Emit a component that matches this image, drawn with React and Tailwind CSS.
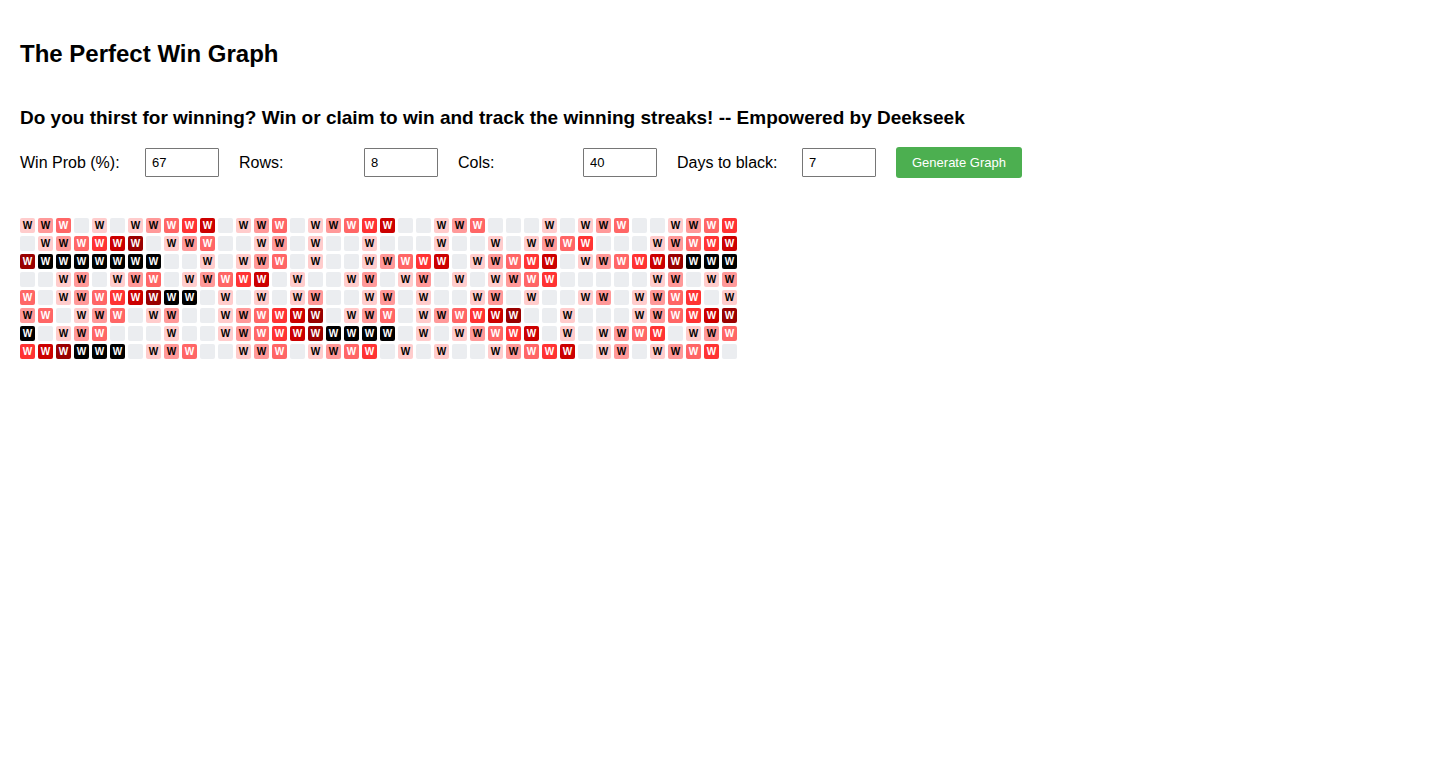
import { useState } from "react";

const INITIAL_ROWS = [
  "1110101111101110111110011100010111001111",
  "0111111011100110100100010010111100011111",
  "1111111100101110100111110111110111111111",
  "0011011101111101001101101011110000011011",
  "1011111111010101100110100110100110111101",
  "1101110110011111101110111111001000111111",
  "1011100010011111111110101111101011110111",
  "1111110111001110111101010011111011011110",
];

const EMPTY = "bg-[#ebedf0] text-black";
const SHADES = [
  "bg-[#ffcccc] text-black",
  "bg-[#ff9999] text-black",
  "bg-[#ff6666] text-white",
  "bg-[#ff3333] text-white",
  "bg-[#cc0000] text-white",
  "bg-[#990000] text-white",
];
const BLACK = "bg-black text-white";

// A streak runs on from the end of one row to the start of the next.
function toStreaks(rows) {
  let streak = 0;
  return rows.map((row) =>
    [...row].map((day) => {
      streak = day === "1" ? streak + 1 : 0;
      return streak;
    })
  );
}

function shadeFor(streak, daysToBlack) {
  if (streak === 0) return EMPTY;
  if (streak >= daysToBlack) return BLACK;
  const step = Math.floor(((streak - 1) * SHADES.length) / Math.max(1, daysToBlack - 1));
  return SHADES[Math.min(step, SHADES.length - 1)];
}

function NumberField({ id, label, value, onChange, min, max }) {
  return (
    <div className="flex items-center gap-[5px]">
      <label htmlFor={id} className="w-[120px]">
        {label}
      </label>
      <input
        id={id}
        type="number"
        min={min}
        max={max}
        value={value}
        onChange={(event) => onChange(event.target.value)}
        className="h-[29px] w-[74px] rounded-[1px] border border-[#767676] bg-white px-1.5 text-[13px]"
      />
    </div>
  );
}

export default function App() {
  const [prob, setProb] = useState("67");
  const [rows, setRows] = useState("8");
  const [cols, setCols] = useState("40");
  const [days, setDays] = useState("7");
  const [graph, setGraph] = useState({ rows: INITIAL_ROWS, days: 7 });

  function generate(event) {
    event.preventDefault();
    const next = Array.from({ length: Number(rows) }, () =>
      Array.from({ length: Number(cols) }, () =>
        Math.random() * 100 < Number(prob) ? "1" : "0"
      ).join("")
    );
    setGraph({ rows: next, days: Number(days) });
  }

  return (
    <main className="p-5 pt-10 font-['Liberation_Sans',Arial,sans-serif] text-base text-black">
      <h1 className="text-2xl leading-7 font-bold">The Perfect Win Graph</h1>
      <h2 className="mt-10 text-[19px] leading-5 font-bold">
        Do you thirst for winning? Win or claim to win and track the winning streaks! -- Empowered by Deekseek
      </h2>

      <form onSubmit={generate} className="mt-[19px] flex flex-wrap items-center gap-5">
        <NumberField id="prob" label="Win Prob (%):" value={prob} onChange={setProb} min={0} max={100} />
        <NumberField id="rows" label="Rows:" value={rows} onChange={setRows} min={1} max={50} />
        <NumberField id="cols" label="Cols:" value={cols} onChange={setCols} min={1} max={100} />
        <NumberField id="days" label="Days to black:" value={days} onChange={setDays} min={1} max={30} />
        <button
          type="submit"
          className="cursor-pointer rounded-[3px] bg-[#4caf50] px-4 py-2 text-[13px] leading-[15px] text-white hover:bg-[#45a049]"
        >
          Generate Graph
        </button>
      </form>

      <div className="mt-10 flex flex-col gap-[3px]">
        {toStreaks(graph.rows).map((row, r) => (
          <div key={r} className="flex gap-[3px]">
            {row.map((streak, c) => (
              <div
                key={c}
                className={`flex size-[15px] shrink-0 items-center justify-center rounded-xs text-[10px] leading-none font-bold ${shadeFor(streak, graph.days)}`}
              >
                {streak > 0 ? "W" : ""}
              </div>
            ))}
          </div>
        ))}
      </div>
    </main>
  );
}
